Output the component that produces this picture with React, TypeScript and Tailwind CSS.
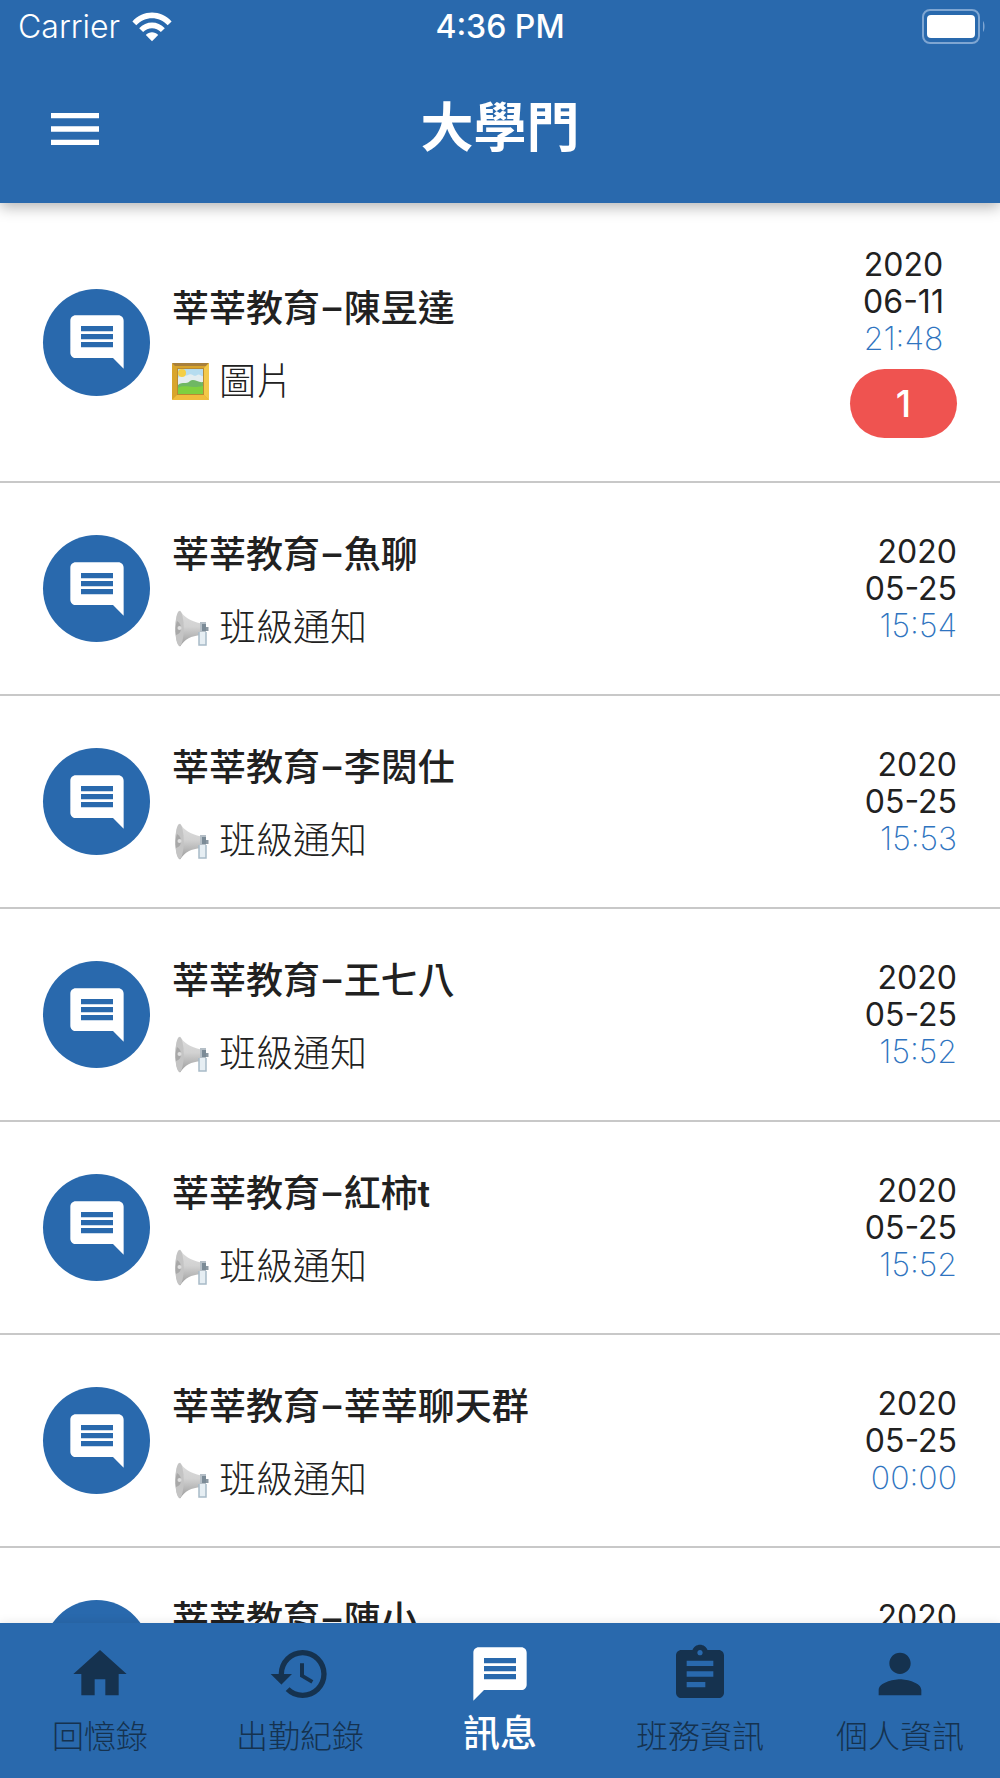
import React from "react";
import {
  MdAssignment,
  MdComment,
  MdHistory,
  MdHome,
  MdMenu,
  MdMessage,
  MdPerson,
} from "react-icons/md";

const WifiIcon = () => (
  <svg viewBox="0 0 40 30" className="w-10 h-[30px]" fill="#fff" aria-hidden="true">
    <path d="M0.4 9.4C11 -2.4 29 -2.4 39.6 9.4L35.7 13.3C27.3 3.9 12.7 3.9 4.3 13.3Z" />
    <path d="M7.2 16.2C14.2 8.6 25.8 8.6 32.8 16.2L28.9 20.1C24.2 14.9 15.8 14.9 11.1 20.1Z" />
    <path d="M13.8 23C17.2 19.2 22.8 19.2 26.2 23L20 29.3Z" />
  </svg>
);

const BatteryIcon = () => (
  <svg viewBox="0 0 64 36" className="w-16 h-9" aria-hidden="true">
    <rect x="1" y="1" width="56" height="33" rx="7" fill="none" stroke="#7fa6d2" strokeWidth="2" />
    <rect x="5" y="6" width="48" height="23" rx="4" fill="#fff" />
    <path d="M61 12C63 14 63 21 61 23Z" fill="#7fa6d2" />
  </svg>
);

const PictureIcon = () => (
  <svg viewBox="0 0 37 37" className="w-[37px] h-[37px]" aria-hidden="true">
    <rect width="37" height="37" rx="1" fill="#d9a52c" />
    <path d="M0 0H37L34 3H3Z" fill="#a9803a" />
    <path d="M37 0V37L31 31V6Z" fill="#f3c94a" />
    <path d="M0 37L6 31H31L37 37Z" fill="#f0bd3d" />
    <rect x="5" y="5" width="27" height="27" fill="#b98b32" />
    <rect x="6" y="6" width="25" height="25" fill="#b5dcef" />
    <path d="M6 15C10 10 13 14 16 12C20 9 22 15 25 12C28 10 29 14 31 13V23H6Z" fill="#e3edf0" />
    <circle cx="10" cy="10" r="4" fill="#f4cf45" />
    <path d="M6 22C11 18 14 22 18 18C22 15 26 20 31 19V31H6Z" fill="#6fb764" />
    <path d="M6 25C13 21 18 26 31 23V31H6Z" fill="#7fd03f" />
  </svg>
);

const MegaphoneIcon = () => (
  <svg viewBox="0 0 37 37" className="w-[37px] h-[37px]" aria-hidden="true">
    <defs>
      <linearGradient id="horn" x1="0" y1="0" x2="0" y2="1">
        <stop offset="0" stopColor="#dcdcdc" />
        <stop offset="0.45" stopColor="#d2d2d2" />
        <stop offset="1" stopColor="#9a9a9a" />
      </linearGradient>
    </defs>
    <path d="M8 0.5C12 7 18 11 29 13.5V25C19 26 13 29 8 36.5C2 32 2 5 8 0.5Z" fill="url(#horn)" />
    <ellipse cx="7.5" cy="18.5" rx="4.3" ry="17.5" fill="#c4c4c4" />
    <path d="M5 11C8 13 9 15 9 18C9 22 7 24 4 25C3 21 3.500 15 5 11Z" fill="#a8a8a8" />
    <circle cx="7.500" cy="18" r="2" fill="#dedede" />
    <path d="M28 12H34V24H28Z" fill="#b4bec6" />
    <path d="M30 14H34V21H30Z" fill="#7b8b97" />
    <path d="M34 17H36.500V21H34Z" fill="#8c99a3" />
    <path d="M27 22V35H34V22" fill="#e6eef3" stroke="#a8bac7" strokeWidth="1.500" />
  </svg>
);

type Chat = {
  name: string;
  kind: "picture" | "notice";
  year: string;
  day: string;
  time: string;
  unread?: number;
};

const chats: Chat[] = [
  { name: "莘莘教育–陳昱達", kind: "picture", year: "2020", day: "06-11", time: "21:48", unread: 1 },
  { name: "莘莘教育–魚聊", kind: "notice", year: "2020", day: "05-25", time: "15:54" },
  { name: "莘莘教育–李閎仕", kind: "notice", year: "2020", day: "05-25", time: "15:53" },
  { name: "莘莘教育–王七八", kind: "notice", year: "2020", day: "05-25", time: "15:52" },
  { name: "莘莘教育–紅柿t", kind: "notice", year: "2020", day: "05-25", time: "15:52" },
  { name: "莘莘教育–莘莘聊天群", kind: "notice", year: "2020", day: "05-25", time: "00:00" },
  { name: "莘莘教育–陳小", kind: "notice", year: "2020", day: "05-25", time: "00:00" },
];

const tabs = [
  { label: "回憶錄", icon: <MdHome /> },
  { label: "出勤紀錄", icon: <MdHistory /> },
  { label: "訊息", icon: <MdMessage />, active: true },
  { label: "班務資訊", icon: <MdAssignment /> },
  { label: "個人資訊", icon: <MdPerson /> },
];

const ChatRow = ({ chat }: { chat: Chat }) => (
  <li className="flex items-center px-[43px] py-[39px] border-b-2 border-[#c8c8c8]">
    <span className="flex items-center justify-center w-[107px] h-[107px] rounded-full bg-[#2969ad] text-white text-[64px] shrink-0">
      <MdComment />
    </span>
    <div className="flex-1 min-w-0 ml-[22px] pt-[7px]">
      <h2 className="text-[37px] leading-[54px] font-medium font-[Roboto,'Noto_Sans_CJK_TC',sans-serif]">
        {chat.name}
      </h2>
      <p className="flex items-center gap-[10px] mt-[18px] text-[37px] leading-[54px] font-light">
        {chat.kind === "picture" ? <PictureIcon /> : <MegaphoneIcon />}
        <span>{chat.kind === "picture" ? "圖片" : "班級通知"}</span>
      </p>
    </div>
    <div
      className={
        chat.unread
          ? "flex flex-col items-center py-1 text-[32px] leading-[37px]"
          : "flex flex-col items-end text-[32px] leading-[37px]"
      }>
      <span>{chat.year}</span>
      <span>{chat.day}</span>
      <span className="font-extralight text-[#2f74c0]">{chat.time}</span>
      {chat.unread && (
        <span className="flex items-center justify-center w-[107px] h-[69px] mt-3 rounded-full bg-[#ef5350] text-white text-[37px] font-medium">
          {chat.unread}
        </span>
      )}
    </div>
  </li>
);

const App = () => {
  return (
    <div
      lang="zh-Hant"
      className="flex flex-col h-screen bg-white text-[#212121] font-[Inter,'Noto_Sans_CJK_TC',sans-serif]">
      <header className="relative z-10 bg-[#2969ad] text-white shadow-[0_4px_14px_rgba(0,0,0,0.3)]">
        <div className="grid grid-cols-3 items-center h-[54px] px-[14px] text-[32px]">
          <div className="flex items-center gap-3 pl-1">
            <span className="font-light">Carrier</span>
            <WifiIcon />
          </div>
          <span className="text-center font-medium">4:36 PM</span>
          <div className="flex justify-end">
            <BatteryIcon />
          </div>
        </div>
        <div className="grid grid-cols-3 items-center h-[149px] px-[43px]">
          <button aria-label="選單" className="w-16 text-[64px] cursor-pointer">
            <MdMenu />
          </button>
          <h1 className="text-center text-[53px] font-bold">大學門</h1>
        </div>
      </header>

      <ul className="flex-1 min-h-0 overflow-y-auto [scrollbar-width:none]">
        {chats.map((chat, index) => (
          <ChatRow key={index} chat={chat} />
        ))}
      </ul>

      <nav className="relative z-10 flex h-[155px] pt-[19px] bg-[#2969ad] shadow-[0_0_10px_rgba(0,0,0,0.1)]">
        {tabs.map((tab) => (
          <button
            key={tab.label}
            className={
              tab.active
                ? "flex-1 flex flex-col items-center text-white cursor-pointer"
                : "flex-1 flex flex-col items-center text-[#15324f] cursor-pointer"
            }>
            <span className="text-[64px]">{tab.icon}</span>
            <span
              className={
                tab.active
                  ? "text-[37px] leading-[56px] font-medium"
                  : "text-[32px] leading-[62px] font-light"
              }>
              {tab.label}
            </span>
          </button>
        ))}
      </nav>
    </div>
  );
};

export default App;
